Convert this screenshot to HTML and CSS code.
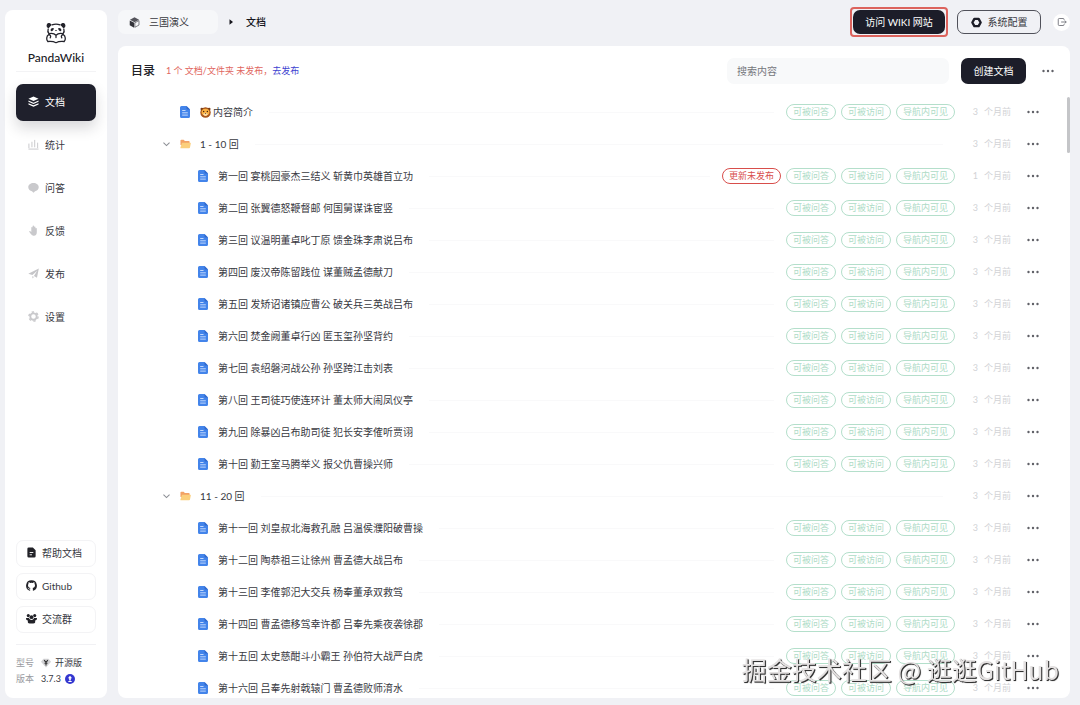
FILE: index.html
```html
<!DOCTYPE html>
<html lang="zh-CN">
<head>
<meta charset="utf-8">
<title>PandaWiki</title>
<link rel="stylesheet" href="styles.css">
</head>
<body>
<svg class="sprite" aria-hidden="true">
  <symbol id="i-doc" viewBox="0 0 10 12"><path fill="#4384ea" d="M1.5 0H6.500L10 3.500V10.500A1.500 1.500 0 0 1 8.500 12H1.500A1.500 1.500 0 0 1 0 10.500V1.500A1.500 1.500 0 0 1 1.500 0Z"/><path fill="#3169cb" d="M6.500 0 10 3.500H7.500A1 1 0 0 1 6.500 2.500Z"/><path stroke="#d3e3ff" stroke-width=".9" d="M2.200 4.500H5.500M2.200 6.800H7.800M2.200 9.100H7.800"/></symbol>
  <symbol id="i-folder" viewBox="0 0 12 10"><path fill="#f2a265" d="M.500 1.300A1 1 0 0 1 1.500.300H4L5.300 1.600H9.500A1 1 0 0 1 10.500 2.600V6H.500Z"/><path fill="#fbcf7c" d="M2.200 3.600H11.200A.6.6 0 0 1 11.800 4.300L10.900 8.800A1 1 0 0 1 9.900 9.600H1A.6.6 0 0 1 .4 9Z"/></symbol>
  <symbol id="i-down" viewBox="0 0 8 8"><path fill="none" stroke="#8b8e94" stroke-width=".9" d="M1.300 2.300 4 5 6.700 2.300"/></symbol>
  <symbol id="i-more" viewBox="0 0 12 4"><circle cx="1.500" cy="2" r="1.200"/><circle cx="6" cy="2" r="1.200"/><circle cx="10.500" cy="2" r="1.200"/></symbol>
</svg>
<div class="app">
  <aside class="sidebar">
    <div class="brand">
      <svg class="panda" viewBox="0 0 22 22" fill="none" stroke="#23232b" stroke-width="1.300" stroke-linecap="round" stroke-linejoin="round"><path d="M7 2.800C9.500 1.900 12.500 1.900 15 2.800M3.200 7C2.500 9 2.900 10.500 3.900 11.500M18.800 7C19.500 9 19.100 10.500 18.100 11.500"/><path fill="#23232b" d="M5.800 2.900C5 .9 2.200 1.300 2.200 3.700 2.200 4.700 2.700 5.300 3.400 5.500ZM16.200 2.900C17 .9 19.800 1.300 19.800 3.700 19.800 4.700 19.300 5.300 18.600 5.500Z"/><path fill="#23232b" stroke="none" d="M5.600 8C5.600 6.300 7.300 5.600 8.500 6 9.200 6.500 8.500 8.200 7.300 9 6.300 9.500 5.600 9 5.600 8ZM16.400 8C16.400 6.300 14.700 5.600 13.500 6 12.800 6.500 13.500 8.200 14.700 9 15.700 9.500 16.400 9 16.400 8ZM9.900 8H12.100L11 9.300Z"/><path d="M11 13.300C9.500 11.700 7 11.100 4.500 11.600M11 13.300C12.500 11.700 15 11.100 17.500 11.600M11 13.500V15.500M3.800 12.500C1.200 14 1.200 18 2.800 19.500 6 19.200 8.500 19.300 11 20.700 13.500 19.300 16 19.200 19.200 19.500 20.800 18 20.800 14 18.200 12.500M3.800 12.700C5.500 13 6.200 14.500 5.200 15.800M18.200 12.700C16.500 13 15.800 14.500 16.800 15.800"/></svg>
      <span class="brand-name">PandaWiki</span>
    </div>
    <nav class="nav">
      <a class="nav-item active" href="#"><svg class="ico" viewBox="0 0 12 12" fill="#fff"><path d="M6 .500 11.500 3 6 5.500.500 3Z"/><path d="M.500 5 6 7.300 11.500 5V6.300L6 8.700.500 6.300ZM.500 8 6 10.200 11.500 8V9.200L6 11.700.500 9.200Z"/></svg>文档</a>
      <a class="nav-item" href="#"><svg class="ico" viewBox="0 0 12 12" fill="none" stroke="#c5c5c8"><path d="M1 5V10M4.300 3V9M7.300 1V9M10.500 4V10M.500 11H11.500"/></svg>统计</a>
      <a class="nav-item" href="#"><svg class="ico" viewBox="0 0 12 12" fill="#c9c9cc"><path d="M6 1C9.200 1 11.700 2.800 11.700 5.700 11.700 8.300 9.600 9.800 7.700 10.100L6 11.600 4.300 10.100C2.400 9.800.300 8.300.300 5.700.300 2.800 2.800 1 6 1Z"/></svg>问答</a>
      <a class="nav-item" href="#"><svg class="ico" viewBox="0 0 12 12" fill="#c9c9cc"><path d="M3.600 6V2.800A.7.7 0 0 1 5 2.800V1.300A.8.8 0 0 1 6.600 1.300V2.300A.7.7 0 0 1 8.100 2.500V3.800A.7.7 0 0 1 9.600 4V8C9.600 10.300 8.500 11.700 6.500 11.700 4.500 11.700 3.800 10.800 1.300 7.400 1.200 6.400 2.200 6.200 3.600 7.600Z"/></svg>反馈</a>
      <a class="nav-item" href="#"><svg class="ico" viewBox="0 0 12 12" fill="#c5c5c8"><path d="M11.800.500 9.800 10.500 6.500 8.700 10 3 4.800 7.700.300 6.300ZM4.800 8.700 6.500 9.700 4.800 11.500Z"/></svg>发布</a>
      <a class="nav-item" href="#"><svg class="ico" viewBox="0 0 12 12" fill="none" stroke="#c9c9cc"><circle cx="6" cy="6" r="3.500" stroke-width="2"/><circle cx="6" cy="6" r="5" stroke-width="1.600" stroke-dasharray="2.600 2.636"/></svg>设置</a>
    </nav>
    <div class="links">
      <a class="link" href="#"><svg class="ico" viewBox="0 0 12 12"><path fill="#222228" d="M3 .5H7.500L10.500 3.500V10A1.500 1.500 0 0 1 9 11.500H3A1.500 1.500 0 0 1 1.500 10V2A1.500 1.500 0 0 1 3 .5Z"/><path stroke="#fff" d="M4 6H8M4 8.500H6.500"/></svg>帮助文档</a>
      <a class="link" href="#"><svg class="ico" viewBox="0 0 16 16"><path fill="#222228" d="M8 .4a7.800 7.800 0 0 0-2.500 15.200c.4.100.5-.2.500-.4v-1.500c-2.200.5-2.700-.9-2.700-.9-.4-.9-.9-1.200-.9-1.200-.7-.5.1-.5.1-.5.800.1 1.200.8 1.200.8.700 1.200 1.900.9 2.300.7.100-.5.300-.9.500-1.100-1.700-.2-3.600-.9-3.600-3.900 0-.8.300-1.500.8-2.100-.1-.2-.3-1 .1-2.100 0 0 .7-.2 2.200.8a7.500 7.500 0 0 1 4 0c1.500-1 2.200-.8 2.200-.8.400 1.100.2 1.900.1 2.100.5.600.8 1.300.8 2.100 0 3-1.900 3.700-3.600 3.900.3.200.5.700.5 1.400v2.300c0 .2.100.5.500.4A7.800 7.800 0 0 0 8 .4Z"/></svg>Github</a>
      <a class="link" href="#"><svg class="ico" viewBox="0 0 12 12" fill="#222228"><circle cx="2.500" cy="2.800" r="1.700"/><circle cx="9.500" cy="2.800" r="1.700"/><circle cx="6" cy="4.500" r="2.100"/><path d="M0 5.500H3.300C3.500 6.700 4.500 7.500 6 7.500S8.500 6.700 8.700 5.500H12C12 7.500 11 8.200 10 8.200V10C10 11 9 11.500 6 11.500S2 11 2 10V8.200C1 8.200 0 7.500 0 5.500Z"/></svg>交流群</a>
    </div>
    <dl class="version">
      <dt>型号</dt>
      <dd><svg class="badge" viewBox="0 0 12 12"><path fill="#d2d2d4" d="M3 1H9L12 4.500 6 11.500 0 4.500Z"/><path fill="none" stroke="#333" stroke-width="1.300" d="M3.800 2.500 6 5.300 8.200 2.500M6 5V9M4.200 6.300H7.800"/></svg>开源版</dd>
      <dt>版本</dt>
      <dd>3.7.3<svg class="badge" viewBox="0 0 12 12"><circle cx="6" cy="6" r="6" fill="#3437d0"/><path fill="#fff" d="M6 2 8.500 5H7V7.700H5V5H3.500ZM4 8.500H8V9.500H4Z"/></svg></dd>
    </dl>
  </aside>

  <div class="content">
    <header class="topbar">
      <button class="kb" type="button"><svg class="ico" viewBox="0 0 12 12"><path fill="#55555c" d="M6 .4 11 3 6 5.700 1 3Z"/><path fill="#33333a" d="M.8 3.700 5.600 6.300V11.700L.8 9Z"/><path fill="none" stroke="#55555c" stroke-width=".8" d="M6.400 6.300 10.900 3.900V8.800L6.400 11.200Z"/></svg>三国演义</button>
      <svg class="caret" viewBox="0 0 5 8"><path fill="#15151c" d="M.5 1.200 4 4 .5 6.800Z"/></svg>
      <span class="crumb">文档</span>
      <span class="spacer"></span>
      <span class="highlight"><button class="btn dark" type="button">访问 WIKI 网站</button></span>
      <button class="btn outline" type="button"><svg class="ico" viewBox="0 0 12 12"><path fill="none" stroke="#1c1d27" stroke-width="2.600" stroke-linejoin="round" d="M3.700 2H8.300L10.500 6 8.300 10H3.700L1.500 6Z"/></svg>系统配置</button>
      <button class="logout" type="button" aria-label="退出"><svg class="ico" viewBox="0 0 12 12" fill="none" stroke="#666870"><path d="M8.500 3.500V3A1.200 1.200 0 0 0 7.300 1.800H2.700A1.200 1.200 0 0 0 1.500 3V9A1.200 1.200 0 0 0 2.700 10.200H7.300A1.200 1.200 0 0 0 8.500 9V8.500M5 6H11M9.300 4.200 11.100 6 9.300 7.800"/></svg></button>
    </header>

    <main class="panel">
      <div class="panel-head">
        <h1>目录</h1>
        <p class="notice">1 个 文档/文件夹 未发布，<a href="#">去发布</a></p>
        <span class="spacer"></span>
        <input class="search" type="text" placeholder="搜索内容" aria-label="搜索内容">
        <button class="btn dark create" type="button">创建文档</button>
        <button class="more" type="button" aria-label="更多"><svg><use href="#i-more"/></svg></button>
      </div>
      <ul class="tree" id="tree"></ul>
      <div class="thumb"></div>
    </main>
  </div>
</div>
<div class="watermark">掘金技术社区 @ 逛逛GitHub</div>
<script src="tree.js"></script>
</body>
</html>
```
FILE: tree.js
```js
const rows = [
  { title: '内容简介', emoji: true, level: 1 },
  { title: '1 - 10 回', folder: true },
  { title: '第一回 宴桃园豪杰三结义 斩黄巾英雄首立功', pending: true, age: '1' },
  { title: '第二回 张翼德怒鞭督邮 何国舅谋诛宦竖' },
  { title: '第三回 议温明董卓叱丁原 馈金珠李肃说吕布' },
  { title: '第四回 废汉帝陈留践位 谋董贼孟德献刀' },
  { title: '第五回 发矫诏诸镇应曹公 破关兵三英战吕布' },
  { title: '第六回 焚金阙董卓行凶 匿玉玺孙坚背约' },
  { title: '第七回 袁绍磐河战公孙 孙坚跨江击刘表' },
  { title: '第八回 王司徒巧使连环计 董太师大闹凤仪亭' },
  { title: '第九回 除暴凶吕布助司徒 犯长安李傕听贾诩' },
  { title: '第十回 勤王室马腾举义 报父仇曹操兴师' },
  { title: '11 - 20 回', folder: true },
  { title: '第十一回 刘皇叔北海救孔融 吕温侯濮阳破曹操' },
  { title: '第十二回 陶恭祖三让徐州 曹孟德大战吕布' },
  { title: '第十三回 李傕郭汜大交兵 杨奉董承双救驾' },
  { title: '第十四回 曹孟德移驾幸许都 吕奉先乘夜袭徐郡' },
  { title: '第十五回 太史慈酣斗小霸王 孙伯符大战严白虎' },
  { title: '第十六回 吕奉先射戟辕门 曹孟德败师淯水' }
];

const lion = '<svg class="emoji" viewBox="0 0 12 12"><circle cx="6" cy="6" r="5.700" fill="#a9561c"/><circle cx="2" cy="2.200" r="1.500" fill="#7d3f16"/><circle cx="10" cy="2.200" r="1.500" fill="#7d3f16"/><ellipse cx="6" cy="5.500" rx="4.300" ry="3.700" fill="#fbb040"/><circle cx="4" cy="5" r=".8" fill="#40220f"/><circle cx="8" cy="5" r=".8" fill="#40220f"/><ellipse cx="6" cy="8" rx="2.200" ry="1.700" fill="#ffe0a8"/><path d="M5 6.700H7L6 7.800Z" fill="#40220f"/></svg>';

document.getElementById('tree').innerHTML = rows.map(r => {
  const top = r.folder || r.level === 1;
  const tags = r.folder ? '' :
    (r.pending ? '<span class="tag red">更新未发布</span>' : '') +
    '<span class="tag">可被问答</span><span class="tag">可被访问</span><span class="tag">导航内可见</span>';
  return `<li class="row ${top ? 'top' : 'child'}">
    ${r.folder ? '<button class="toggle" type="button" aria-label="折叠"><svg><use href="#i-down"/></svg></button>' : ''}
    <svg class="${r.folder ? 'folder' : 'doc'}"><use href="#${r.folder ? 'i-folder' : 'i-doc'}"/></svg>
    <a class="title" href="#">${r.emoji ? lion : ''}${r.title}</a>
    <span class="line"></span>
    <span class="tags">${tags}</span>
    <span class="age"><span>${r.age || '3'}</span><span>个月前</span></span>
    <button class="more" type="button" aria-label="更多"><svg><use href="#i-more"/></svg></button>
  </li>`;
}).join('');
```
FILE: styles.css
```css
* { box-sizing: border-box; }
body {
  margin: 0;
  background: #f0f1f5;
  color: #38393f;
  font: 10px/16px Lato, "Noto Sans CJK SC", sans-serif;
}
a { color: inherit; text-decoration: none; }
button { font: inherit; color: inherit; border: 0; background: none; padding: 0; cursor: pointer; }
.sprite { position: absolute; width: 0; height: 0; }
.ico { width: 11px; height: 11px; flex: none; }
.spacer { flex: 1; }

.app { display: flex; gap: 11px; height: 100vh; padding: 0 10px 7px 5px; }

.sidebar {
  display: flex;
  flex-direction: column;
  width: 102px;
  margin-top: 10px;
  padding: 12px 11px 11px;
  background: #fff;
  border-radius: 8px;
}
.brand {
  display: flex;
  flex-direction: column;
  align-items: center;
  gap: 6px;
  padding-bottom: 5px;
  border-bottom: 1px solid #f3f3f5;
}
.panda { width: 22px; height: 22px; }
.brand-name { font-size: 12px; font-weight: 500; color: #202026; }

.nav { display: flex; flex-direction: column; gap: 6px; padding-top: 12px; }
.nav-item {
  display: flex;
  align-items: center;
  gap: 6px;
  height: 37px;
  padding: 0 0 2px 12px;
  border-radius: 7px;
}
.nav-item.active { color: #fff; background: #1f202c; box-shadow: 0 7px 14px #1f202c2b; }

.links { display: flex; flex-direction: column; gap: 6px; margin-top: auto; padding-bottom: 11px; border-bottom: 1px solid #f1f1f4; }
.link {
  display: flex;
  align-items: center;
  gap: 5px;
  height: 27px;
  padding: 0 0 2px 9px;
  border: 1px solid #f3f3f5;
  border-radius: 7px;
}
.version { display: grid; grid-template-columns: 25px 1fr; margin: 0; padding-top: 10px; font-size: 9px; }
.version dt { color: #9a9ba1; }
.version dd { display: flex; align-items: center; gap: 4px; margin: 0; }
.badge { width: 10px; height: 10px; }

.content { display: flex; flex: 1; flex-direction: column; min-width: 0; }
.topbar { display: flex; align-items: center; height: 46px; padding-bottom: 2px; }
.kb {
  display: flex;
  align-items: center;
  gap: 9px;
  width: 100px;
  height: 24px;
  padding-left: 11px;
  border-radius: 7px;
  background: #f6f7f9;
}
.caret { width: 5px; height: 8px; margin: 0 12px 0 11px; }
.crumb { color: #15151c; font-weight: 500; }
.highlight { padding: 1px; border: 2px solid #dc635d; border-radius: 4px; }
.btn { display: flex; align-items: center; justify-content: center; border-radius: 7px; }
.btn.dark { width: 92px; height: 24px; color: #fff; background: #1c1d29; }
.btn.outline { gap: 6px; width: 84px; height: 24px; margin: 0 12px 0 9px; border: 1px solid #50515a; }
.logout { display: flex; align-items: center; justify-content: center; width: 17px; height: 17px; border-radius: 50%; background: #fff; }
.logout .ico { width: 10px; height: 10px; }

.panel {
  position: relative;
  display: flex;
  flex: 1;
  flex-direction: column;
  min-height: 0;
  overflow: hidden;
  border-radius: 8px;
  background: #fff;
}
.panel-head { display: flex; align-items: center; height: 50px; padding: 0 16px 0 13px; }
h1 { margin: 0 11px 0 0; font-size: 12px; font-weight: 500; color: #202026; }
.notice { margin: 0; font-size: 9px; color: #df6660; }
.notice a { color: #3d3fd0; }
.search {
  width: 222px;
  height: 26px;
  margin-right: 12px;
  padding: 0 10px;
  border: 0;
  border-radius: 7px;
  background: #f8f9fa;
  font: inherit;
}
.search::placeholder { color: #75767c; opacity: 1; }
.btn.create { width: 65px; height: 26px; margin-right: 16px; }
.more { display: flex; }
.more svg { width: 12px; height: 4px; fill: #606167; }

.tree { flex: 1; min-height: 0; margin: 0; padding: 0; overflow-y: auto; scrollbar-width: none; list-style: none; }
.row { display: flex; align-items: center; height: 32px; padding-right: 31px; }
.row.top { padding-left: 62px; }
.row.child { padding-left: 80px; }
.toggle { display: flex; margin: 0 9px 0 -18px; }
.toggle svg { width: 9px; height: 9px; }
.doc { width: 10px; height: 12px; margin-right: 10px; }
.folder { width: 11px; height: 10px; margin-right: 9px; }
.title { display: flex; align-items: center; gap: 2px; white-space: pre; }
.emoji { width: 11px; height: 11px; }
.line { flex: 1; height: 1px; margin: 0 12px 0 16px; background: #f9f9fa; }
.tags { display: flex; gap: 5px; }
.tag {
  height: 16px;
  padding: 0 6px;
  border: 1px solid #b4dfcb;
  border-radius: 8px;
  color: #aedbc6;
  font-size: 9px;
  line-height: 14px;
}
.tag.red { color: #d84e4b; border-color: #d84e4b; }
.age { display: flex; justify-content: flex-end; gap: 6px; width: 56px; margin-right: 16px; color: #d2d3d6; font-size: 9px; }

.thumb { position: absolute; top: 51px; right: 0; width: 3px; height: 56px; border-radius: 2px; background: #c4c5c8; }

.watermark {
  position: fixed;
  right: 21px;
  bottom: 17px;
  color: #e4e1e1;
  font: 25px/37px "Noto Sans CJK SC", sans-serif;
  text-shadow: 1px 1px 0 #333, 1px 1px 1px #555;
  pointer-events: none;
}
```
